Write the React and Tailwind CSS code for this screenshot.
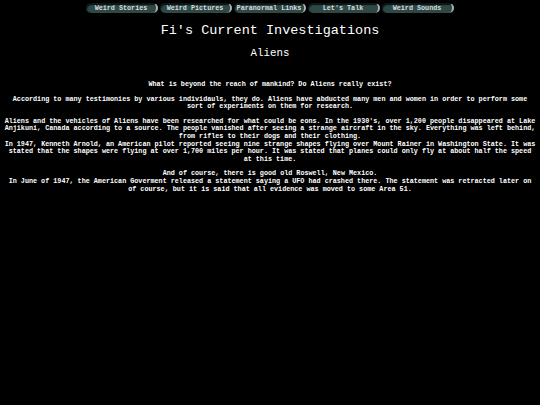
const links = ['Weird Stories', 'Weird Pictures', 'Paranormal Links', "Let's Talk", 'Weird Sounds'];

function NavButton({ label }) {
  return (
    <a
      href="#"
      className="flex h-[10px] w-[72px] items-center justify-center rounded-full border-r-[2px] border-t-[1px] border-[#aab4b4] border-t-[#0c1414] bg-[#2e4846] text-[6.75px] font-bold leading-none text-[#d4dcdc] shadow-[inset_1px_1px_1px_#0b1212]"
    >
      {label}
    </a>
  );
}

export default function App() {
  return (
    <div
      className="min-h-[405px] w-full bg-black text-white"
      style={{ fontFamily: '"Liberation Mono", "Courier New", monospace' }}
    >
      <nav className="flex justify-center gap-[2px] pt-[3px]">
        {links.map(l => (
          <NavButton key={l} label={l} />
        ))}
      </nav>

      <h1 className="mt-[10px] text-center text-[13.5px] leading-[15px]">Fi's Current Investigations</h1>
      <h2 className="mt-[9px] text-center text-[10.8px] leading-[12px]">Aliens</h2>

      <div className="mt-[22px] px-[4px] text-center text-[6.75px] font-bold leading-[7.6px]">
        <p>What is beyond the reach of mankind? Do Aliens really exist?</p>
        <p className="mt-[7px]">
          According to many testimonies by various individauls, they do. Aliens have abducted many men and women in order to perform some sort of experiments on them for research.
        </p>
        <p className="mt-[7px]">
          Aliens and the vehicles of Aliens have been researched for what could be eons. In the 1930's, over 1,200 people disappeared at Lake Anjikuni, Canada according to a source. The people vanished after seeing a strange aircraft in the sky. Everything was left behind, from rifles to their dogs and their clothing.
          <br />
          In 1947, Kenneth Arnold, an American pilot reported seeing nine strange shapes flying over Mount Rainer in Washington State. It was stated that the shapes were flying at over 1,700 miles per hour. It was stated that planes could only fly at about half the speed at this time.
        </p>
        <p className="mt-[7px]">
          And of course, there is good old Roswell, New Mexico.
          <br />
          In June of 1947, the American Goverment released a statement saying a UFO had crashed there. The statement was retracted later on of course, but it is said that all evidence was moved to some Area 51.
        </p>
      </div>
    </div>
  );
}
